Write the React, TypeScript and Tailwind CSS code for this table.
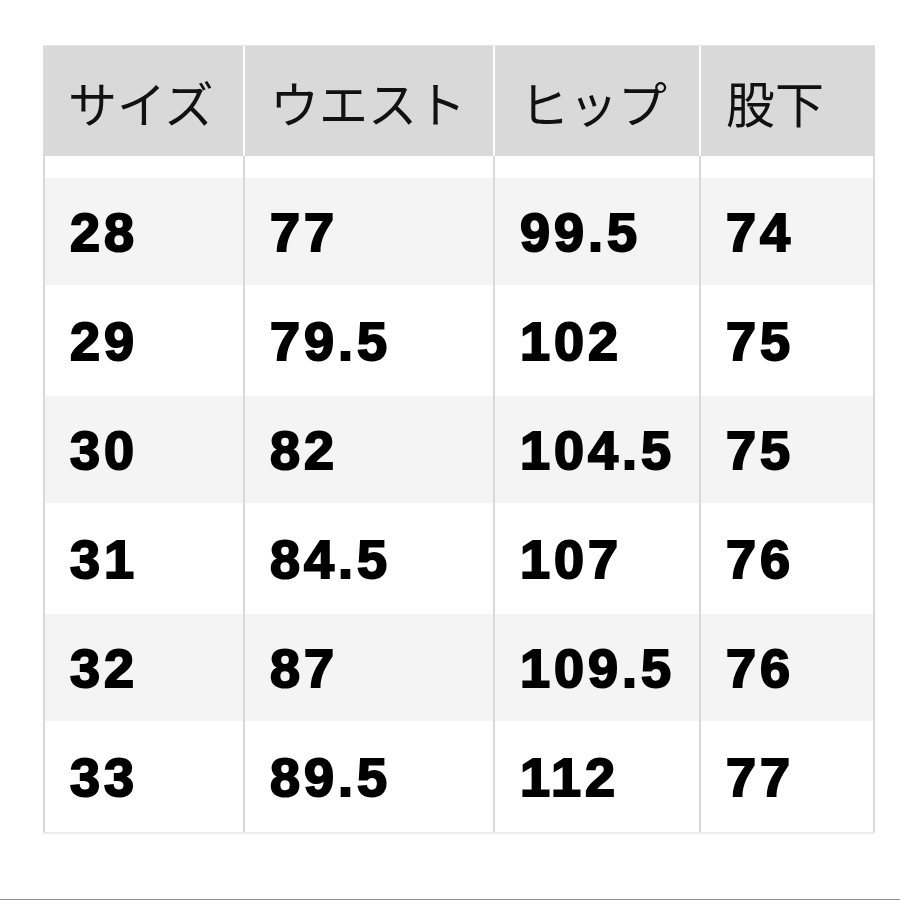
const HEADERS = ["サイズ", "ウエスト", "ヒップ", "股下"];

const ROWS: string[][] = [
  ["28", "77", "99.5", "74"],
  ["29", "79.5", "102", "75"],
  ["30", "82", "104.5", "75"],
  ["31", "84.5", "107", "76"],
  ["32", "87", "109.5", "76"],
  ["33", "89.5", "112", "77"],
];

const COLS = "grid grid-cols-[200px_250px_206px_176px]";

export default function App() {
  return (
    <div className="relative w-[900px] h-[900px] bg-white overflow-hidden">
      <div className="pt-[45px] pl-[43px]">
        <div className="w-[832px]">
          {/* header */}
          <div className={`${COLS} h-[111px] bg-[#d9d9d9] border-t border-[#e6e6e6]`}>
            {HEADERS.map((h, i) => (
              <div
                key={h}
                className={`flex items-center pl-[25px] text-[49px] leading-none font-normal text-[#111] font-['Noto_Sans_CJK_JP',sans-serif] ${
                  i > 0 ? "border-l-2 border-white" : ""
                }`}
              >
                {h}
              </div>
            ))}
          </div>

          {/* white gap under header */}
          <div className={`${COLS} h-[22px] bg-white`}>
            {HEADERS.map((h, i) => (
              <div
                key={h}
                className={`border-l-2 border-[#d9d9d9] ${i === 3 ? "border-r-2" : ""}`}
              />
            ))}
          </div>

          <div className="border-b-2 border-[#ececec]">
            {ROWS.map((row, r) => (
              <div
                key={row[0]}
                className={`${COLS} ${r % 2 === 1 ? "h-[111px]" : "h-[107px]"} ${
                  r % 2 === 0 ? "bg-[#f4f4f4]" : "bg-white"
                }`}
              >
                {row.map((cell, i) => (
                  <div
                    key={i}
                    className={`flex items-center pl-[25px] border-l-2 border-[#d9d9d9] ${
                      i === 3 ? "border-r-2" : ""
                    } text-[54px] leading-none font-bold tracking-[4px] text-black font-['Liberation_Sans',Arial,sans-serif] [-webkit-text-stroke:2px_black]`}
                  >
                    {cell}
                  </div>
                ))}
              </div>
            ))}
          </div>
        </div>
      </div>
      <div className="absolute left-0 right-0 bottom-0 h-px bg-[#8f8f8f]" />
    </div>
  );
}
